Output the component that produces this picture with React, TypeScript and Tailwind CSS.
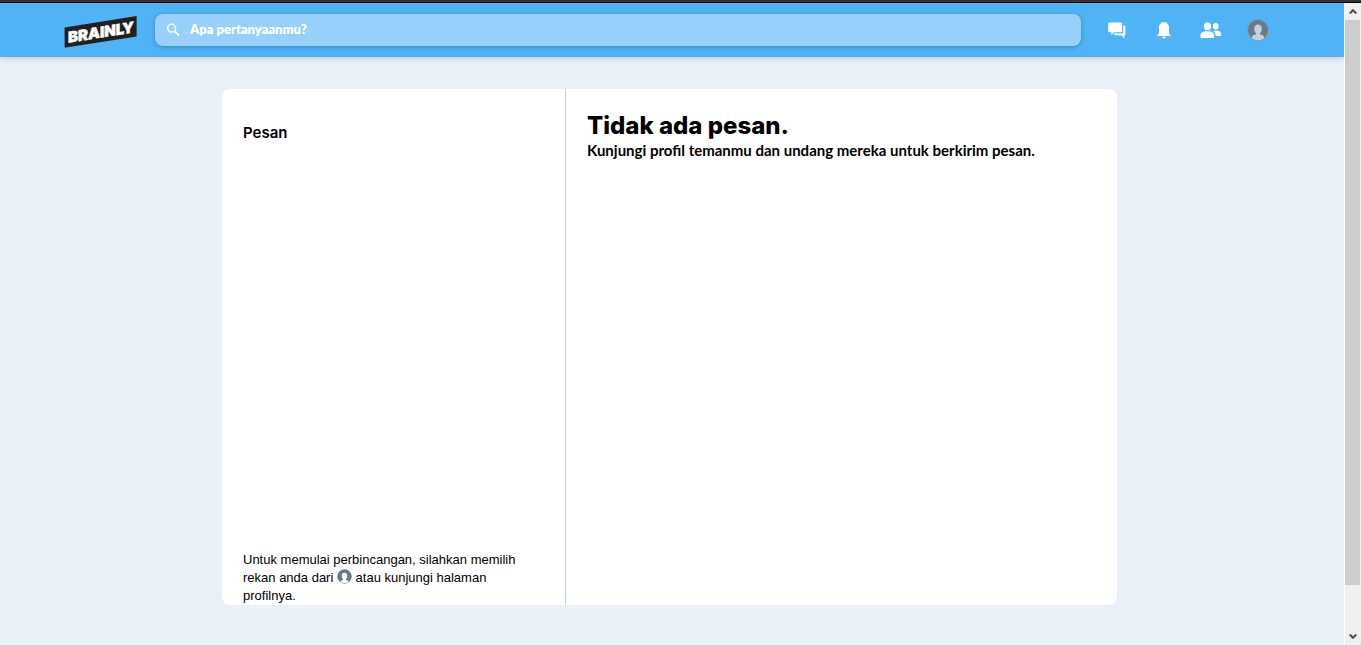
import type { ReactNode } from "react";

function Logo() {
  return (
    <svg viewBox="0 0 73 32" className="block h-8 w-[73px]" role="img" aria-label="Brainly">
      <polygon points="0.6,11.6 72.6,0 72.6,20.4 0.6,31.8" fill="#231f20" />
      <text
        x="4"
        y="27.4"
        transform="skewY(-9)"
        fill="#ffffff"
        stroke="#ffffff"
        strokeWidth="0.5"
        fontFamily="Inter, sans-serif"
        fontWeight="900"
        fontSize="15"
      >
        BRAINLY
      </text>
    </svg>
  );
}

function SearchIcon() {
  return (
    <svg viewBox="0 0 14 14" className="h-[14px] w-[14px] shrink-0" fill="none" stroke="#ffffff" aria-hidden="true">
      <circle cx="5.7" cy="5.2" r="3.9" strokeWidth="1.5" />
      <path d="M8.6 8.1 13.1 12.6" strokeWidth="1.8" />
    </svg>
  );
}

function MessagesIcon() {
  return (
    <svg viewBox="0 0 18 17" className="h-[17px] w-[18px]" fill="#ffffff" aria-hidden="true">
      <path d="M1 0.5h12.300a.8.8 0 0 1 .8.8v8.200a.8.8 0 0 1-.8.8H6.600L3.400 13.300V10.300H1a.8.8 0 0 1-.8-.8V1.300A.8.8 0 0 1 1 .5Z" />
      <path d="M15.300 3.500h1.200a.8.8 0 0 1 .8.8v9h-1v3L13.100 13.300H6.500V11.600h8a.8.8 0 0 0 .8-.8Z" />
    </svg>
  );
}

function BellIcon() {
  return (
    <svg viewBox="0 0 14 17" className="h-[17px] w-[14px]" fill="#ffffff" aria-hidden="true">
      <path d="M7 0.300C9.800.300 12 2.400 12 5.300v4.200c0 2 .4 2.900 1.600 3.700v.9H.4v-.9C1.600 12.400 2 11.500 2 9.500V5.300C2 2.400 4.200.300 7 .300Z" />
      <path d="M5 14.700h4a2 1.700 0 0 1-4 0Z" />
    </svg>
  );
}

function FriendsIcon() {
  return (
    <svg viewBox="0 0 22 17" className="h-[17px] w-[22px]" fill="#ffffff" aria-hidden="true">
      <ellipse cx="7.500" cy="4.300" rx="3.600" ry="4" />
      <path d="M.5 16v-2.500c0-2.700 2.600-4.200 6.800-4.200s6.800 1.500 6.800 4.200V16Z" />
      <ellipse cx="15.700" cy="4.200" rx="2.900" ry="3.300" />
      <path d="M13.200 9c.7-.3 1.700-.5 2.900-.5 3.200 0 5.100 1.700 5.100 3.900v1.700h-5.700v-.700c0-1.900-.8-3.400-2.300-4.400Z" />
    </svg>
  );
}

function ProfileIcon() {
  return (
    <svg viewBox="0 0 22 22" className="h-[22px] w-[22px]" aria-hidden="true">
      <circle cx="11" cy="11" r="10.500" fill="#687b8c" stroke="#8e9ba5" />
      <path d="M4.800 19.300c0-2.700 2-3.500 4.200-3.700v-1.300C7.700 13.300 7.200 11.400 7.200 9.600 7.200 7 8.700 5.400 11 5.400s3.800 1.600 3.800 4.200c0 1.800-.5 3.700-1.800 4.700v1.300c2.200.2 4.200 1 4.200 3.700-1.700 1.200-3.900 1.900-6.200 1.900s-4.500-.7-6.200-1.900Z" fill="#c4d1dc" />
    </svg>
  );
}

function InlineProfileIcon() {
  return (
    <svg viewBox="0 0 15 15" className="inline-block h-[15px] w-[15px] align-[-2px]" aria-hidden="true">
      <circle cx="7.500" cy="7.500" r="7.200" fill="#687b8c" />
      <path d="M3.400 12.700c.2-1.100 1.400-1.500 2.700-1.700v-.7C5.300 9.600 4.800 8.200 4.800 6.800c0-1.900 1-3.100 2.700-3.100s2.700 1.200 2.700 3.100c0 1.400-.5 2.800-1.300 3.500v.7c1.300.2 2.500.6 2.700 1.700-1.100.9-2.500 1.400-4.100 1.400s-3-.5-4.100-1.400Z" fill="#ffffff" />
    </svg>
  );
}

function NavButton({ label, children }: { label: string; children: ReactNode }) {
  return (
    <button type="button" aria-label={label} className="flex h-8 w-6 items-center justify-center">
      {children}
    </button>
  );
}

function Header() {
  return (
    <header className="flex h-[54px] items-center bg-[#4fb3f6] pr-[74px] pl-16 shadow-[0_1px_6px_rgba(0,0,0,0.2)]">
      <a href="#" className="mt-1 mr-[18px] shrink-0">
        <Logo />
      </a>
      <label className="flex h-8 min-w-0 flex-1 items-center gap-[10px] rounded-lg bg-[#96d0fb] pr-3 pl-[11px] shadow-[0_1px_4px_rgba(0,0,0,0.25)]">
        <SearchIcon />
        <input
          type="search"
          aria-label="Cari"
          placeholder="Apa pertanyaanmu?"
          className="min-w-0 flex-1 bg-transparent font-['Lato',sans-serif] text-[13px] font-extrabold text-white outline-none placeholder:text-white"
        />
      </label>
      <nav aria-label="Akun" className="ml-6 flex shrink-0 gap-[23px]">
        <NavButton label="Pesan"><MessagesIcon /></NavButton>
        <NavButton label="Pemberitahuan"><BellIcon /></NavButton>
        <NavButton label="Teman"><FriendsIcon /></NavButton>
        <NavButton label="Profil"><ProfileIcon /></NavButton>
      </nav>
    </header>
  );
}

function ScrollRail() {
  return (
    <div aria-hidden="true" className="flex w-[17px] shrink-0 flex-col border-l border-white bg-[#f0f0f0]">
      <div className="flex h-[17px] items-center justify-center">
        <svg viewBox="0 0 8 7" className="h-[7px] w-2" fill="none" stroke="#505050" strokeWidth="2">
          <path d="M.7 5.500 4 2.200 7.300 5.500" />
        </svg>
      </div>
      <div className="mr-px flex-[565] bg-[#cdcdcd]" />
      <div className="flex-[43]" />
      <div className="flex h-[17px] items-center justify-center">
        <svg viewBox="0 0 8 7" className="h-[7px] w-2" fill="none" stroke="#505050" strokeWidth="2">
          <path d="M.7 1.500 4 4.800 7.300 1.500" />
        </svg>
      </div>
    </div>
  );
}

export default function App() {
  return (
    <div className="flex min-h-screen flex-col bg-[#e9f0f8] font-['Inter',sans-serif] text-black">
      <div className="h-[3px] border-b border-black bg-[#333333]" />
      <div className="flex flex-1">
        <div className="min-w-0 flex-1">
          <Header />
          <main className="pt-8 pr-[5px] pb-10">
            <div className="mx-auto flex min-h-[516px] max-w-[895px] overflow-hidden rounded-lg bg-white">
              <aside className="flex w-[344px] shrink-0 flex-col justify-between border-r border-[#c4d1dc] px-[21px] pt-8">
                <h1 className="text-[15px] leading-6 font-semibold">Pesan</h1>
                <p className="pr-5 font-['Liberation_Sans',sans-serif] text-[13px] leading-[18px]">
                  Untuk memulai perbincangan, silahkan memilih rekan anda dari <InlineProfileIcon /> atau kunjungi halaman profilnya.
                </p>
              </aside>
              <section className="min-w-0 flex-1 px-[21px] pt-[22px]">
                <h2 className="text-2xl leading-[30px] font-extrabold">Tidak ada pesan.</h2>
                <p className="font-['Lato',sans-serif] text-[15px] leading-[18px] font-bold">
                  Kunjungi profil temanmu dan undang mereka untuk berkirim pesan.
                </p>
              </section>
            </div>
          </main>
        </div>
        <ScrollRail />
      </div>
    </div>
  );
}
